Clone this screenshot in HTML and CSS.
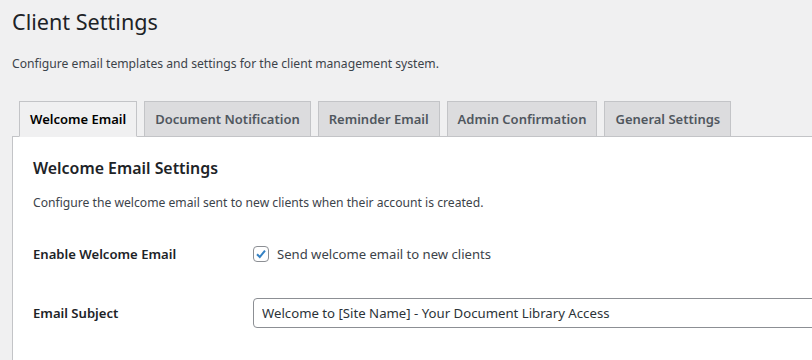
FILE: index.html
```html
<!DOCTYPE html>
<html lang="en">
<head>
    <meta charset="UTF-8">
    <meta name="viewport" content="width=device-width, initial-scale=1.0">
    <title>Client Settings</title>
    <link rel="stylesheet" href="styles.css">
</head>
<body>
    <div class="wrap">
        <h1>Client Settings</h1>
        <p class="intro">Configure email templates and settings for the client management system.</p>

        <nav class="nav-tab-wrapper">
            <a href="#" class="nav-tab active">Welcome Email</a>
            <a href="#" class="nav-tab">Document Notification</a>
            <a href="#" class="nav-tab">Reminder Email</a>
            <a href="#" class="nav-tab">Admin Confirmation</a>
            <a href="#" class="nav-tab">General Settings</a>
        </nav>

        <div class="tab-panel">
            <h2>Welcome Email Settings</h2>
            <p class="description">Configure the welcome email sent to new clients when their account is created.</p>

            <div class="form-table">
                <div class="form-row">
                    <div class="form-label">Enable Welcome Email</div>
                    <div class="form-field">
                        <label class="check">
                            <span class="check-box">
                                <svg width="14" height="14" viewBox="0 0 14 14"><path d="M3 7.2 L5.8 10 L11 3.6" fill="none" stroke="#3582c4" stroke-width="2"/></svg>
                            </span>
                            Send welcome email to new clients
                        </label>
                    </div>
                </div>
                <div class="form-row">
                    <div class="form-label">Email Subject</div>
                    <div class="form-field">
                        <input type="text" class="text-input" value="Welcome to [Site Name] - Your Document Library Access">
                    </div>
                </div>
            </div>
        </div>
    </div>
</body>
</html>
```

FILE: styles.css
```css
body {
    margin: 0;
    background-color: #f0f0f1;
    color: #3c434a;
    font-family: "Noto Sans", "Open Sans", sans-serif;
    font-size: 12.15px;
    line-height: 18px;
    overflow: hidden;
}
.wrap {
    margin: 0 0 0 12px;
    width: 1100px;
}
h1 {
    font-size: 21.6px;
    font-weight: 400;
    color: #1d2327;
    margin: 0;
    padding: 7px 0 4px;
    line-height: 30px;
}
.intro {
    margin: 14px 0 0;
}
.nav-tab-wrapper {
    display: flex;
    margin-top: 28px;
    border-bottom: 1px solid #c3c4c7;
}
.nav-tab {
    margin-left: 7px;
    margin-bottom: -1px;
    padding: 5px 10px;
    font-size: 13px;
    line-height: 24px;
    font-weight: 600;
    color: #50575e;
    background-color: #dcdcde;
    border: 1px solid #c3c4c7;
    text-decoration: none;
}
.nav-tab.active {
    background-color: #f0f0f1;
    color: #000;
    border-bottom-color: #f0f0f1;
}
.tab-panel {
    background-color: #fff;
    border: 1px solid #c3c4c7;
    border-top: none;
    padding: 20px 20px;
    height: 400px;
}
h2 {
    font-size: 15.9px;
    font-weight: 600;
    color: #1d2327;
    margin: 0;
    line-height: 22px;
}
.description {
    margin: 15px 0 0;
}
.form-table {
    margin-top: 13px;
}
.form-row {
    display: flex;
    align-items: center;
}
.form-label {
    width: 210px;
    padding: 20px 0;
    font-size: 13.1px;
    font-weight: 600;
    color: #1d2327;
}
.form-field {
    padding: 15px 10px;
    flex: 1;
}
.check {
    display: flex;
    align-items: center;
    gap: 8px;
    font-size: 13.1px;
}
.check-box {
    width: 14px;
    height: 14px;
    border: 1px solid #8c8f94;
    border-radius: 4px;
    display: flex;
    align-items: center;
    justify-content: center;
}
.text-input {
    width: 700px;
    height: 30px;
    box-sizing: border-box;
    border: 1px solid #8c8f94;
    border-radius: 4px;
    padding: 0 8px;
    font-family: inherit;
    font-size: 13.2px;
    color: #2c3338;
}
```
